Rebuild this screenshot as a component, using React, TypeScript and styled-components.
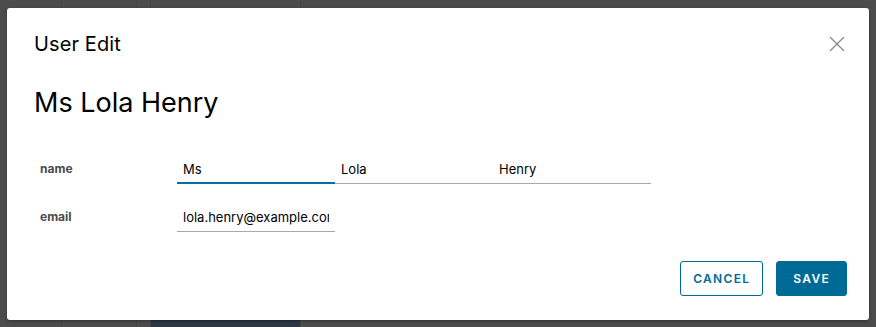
import styled, { createGlobalStyle } from 'styled-components';

const GlobalStyle = createGlobalStyle`
  html, body {
    margin: 0;
    padding: 0;
    width: 100%;
    height: 100%;
    background: #4b4b4b;
    font-family: 'Inter', 'Liberation Sans', sans-serif;
  }
`;

const Backdrop = styled.div`
  position: relative;
  width: 876px;
  height: 327px;
  overflow: hidden;
  background: #4b4b4b;
`;

const GridBehind = styled.div`
  display: flex;
  height: 100%;
`;

const GridColumn = styled.div<{ $w: number }>`
  width: ${({ $w }) => $w}px;
  height: 100%;
  border-right: 1px solid #444;
  display: flex;
  flex-direction: column;
  justify-content: flex-end;
`;

const DarkCell = styled.div`
  height: 7px;
  background: #2d3644;
`;

const Modal = styled.div`
  position: absolute;
  left: 7px;
  top: 8px;
  width: 862px;
  height: 312px;
  box-sizing: border-box;
  background: #fff;
  border-radius: 3px;
  box-shadow: 0 1px 3px rgba(0, 0, 0, 0.35);
  padding: 21px 22px 24px 27px;
  display: flex;
  flex-direction: column;
`;

const Header = styled.div`
  display: flex;
  justify-content: space-between;
  align-items: center;
  height: 30px;
`;

const Title = styled.h3`
  margin: 0;
  font-size: 20px;
  font-weight: 400;
  color: #000;
  letter-spacing: 0.1px;
`;

const CloseButton = styled.button`
  border: none;
  background: none;
  padding: 0;
  width: 20px;
  height: 20px;
  display: flex;
  align-items: center;
  justify-content: center;
  cursor: pointer;
`;

const Heading = styled.h1`
  margin: 24px 0 0;
  font-size: 27px;
  font-weight: 400;
  color: #000;
  line-height: 40px;
`;

const Form = styled.div`
  margin-top: 35px;
  padding-left: 6px;
  display: flex;
  flex-direction: column;
  gap: 22px;
`;

const Row = styled.div`
  display: flex;
  align-items: flex-end;
`;

const Label = styled.label`
  width: 137px;
  font-size: 12px;
  font-weight: 700;
  color: #4a4a4a;
  padding-bottom: 8px;
`;

const Inputs = styled.div`
  display: flex;
`;

const Input = styled.input<{ $focused?: boolean }>`
  width: 158px;
  height: 26px;
  box-sizing: border-box;
  border: none;
  border-bottom: ${({ $focused }) => ($focused ? '2px solid #00729f' : '1px solid #a8a8a8')};
  padding: 0 6px ${({ $focused }) => ($focused ? '3px' : '4px')};
  font-family: 'Inter', 'Liberation Sans', sans-serif;
  font-size: 13px;
  color: #000;
  outline: none;
  background: transparent;
`;

const Footer = styled.div`
  margin-top: auto;
  display: flex;
  justify-content: flex-end;
  gap: 13px;
`;

const Button = styled.button<{ $primary?: boolean }>`
  height: 35px;
  box-sizing: border-box;
  padding: 0 ${({ $primary }) => ($primary ? '16px' : '12px')};
  border-radius: 3px;
  border: 1px solid #006a96;
  background: ${({ $primary }) => ($primary ? '#006a96' : '#fff')};
  color: ${({ $primary }) => ($primary ? '#fff' : '#006a96')};
  font-family: 'Inter', 'Liberation Sans', sans-serif;
  font-size: 12px;
  font-weight: 600;
  letter-spacing: 1.3px;
  text-transform: uppercase;
  cursor: pointer;
`;

export default function App() {
  return (
    <>
      <GlobalStyle />
      <Backdrop>
        <GridBehind>
          <GridColumn $w={61} />
          <GridColumn $w={74} />
          <GridColumn $w={13} />
          <GridColumn $w={149}>
            <DarkCell />
          </GridColumn>
        </GridBehind>
        <Modal>
          <Header>
            <Title>User Edit</Title>
            <CloseButton aria-label="close">
              <svg width="16" height="16" viewBox="0 0 16 16">
                <path d="M1 1 L15 15 M15 1 L1 15" stroke="#8a8a8a" strokeWidth="1.3" />
              </svg>
            </CloseButton>
          </Header>
          <Heading>Ms Lola Henry</Heading>
          <Form>
            <Row>
              <Label>name</Label>
              <Inputs>
                <Input $focused defaultValue="Ms" />
                <Input defaultValue="Lola" />
                <Input defaultValue="Henry" />
              </Inputs>
            </Row>
            <Row>
              <Label>email</Label>
              <Inputs>
                <Input defaultValue="lola.henry@example.com" />
              </Inputs>
            </Row>
          </Form>
          <Footer>
            <Button>Cancel</Button>
            <Button $primary>Save</Button>
          </Footer>
        </Modal>
      </Backdrop>
    </>
  );
}
